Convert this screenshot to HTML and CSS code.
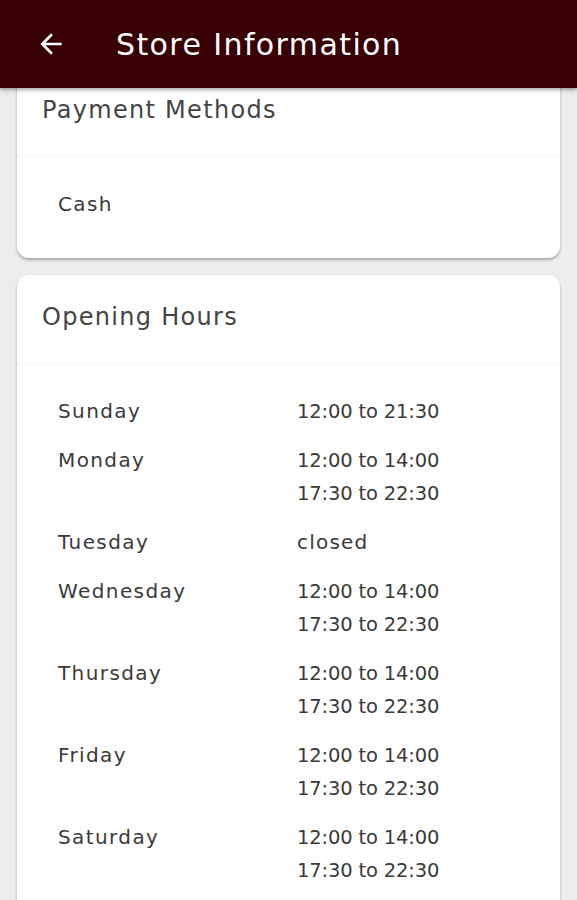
FILE: index.html
```html
<!DOCTYPE html>
<html>
<head>
<meta charset="utf-8">
<link rel="stylesheet" href="styles.css">
</head>
<body>
<header class="appbar">
  <svg class="back" width="32" height="32" viewBox="0 0 24 24"><path d="M20 11H7.83l5.59-5.59L12 4l-8 8 8 8 1.41-1.41L7.83 13H20v-2z" fill="#fff"/></svg>
  <h1 class="appbar-title">Store Information</h1>
</header>
<main class="content">
  <section class="card first">
    <div class="card-head">Payment Methods</div>
    <div class="card-body">
      <div class="label">Cash</div>
    </div>
  </section>
  <section class="card">
    <div class="card-head">Opening Hours</div>
    <div class="card-body hours">
      <div class="label">Sunday</div><div class="times"><div>12:00 to 21:30</div></div>
      <div class="label">Monday</div><div class="times"><div>12:00 to 14:00</div><div>17:30 to 22:30</div></div>
      <div class="label">Tuesday</div><div class="times"><div class="word">closed</div></div>
      <div class="label">Wednesday</div><div class="times"><div>12:00 to 14:00</div><div>17:30 to 22:30</div></div>
      <div class="label">Thursday</div><div class="times"><div>12:00 to 14:00</div><div>17:30 to 22:30</div></div>
      <div class="label">Friday</div><div class="times"><div>12:00 to 14:00</div><div>17:30 to 22:30</div></div>
      <div class="label">Saturday</div><div class="times"><div>12:00 to 14:00</div><div>17:30 to 22:30</div></div>
    </div>
  </section>
</main>
</body>
</html>
```
FILE: styles.css
```css
* { box-sizing: border-box; }
html, body { margin: 0; padding: 0; }
body {
  background: #ededee;
  font-family: "DejaVu Sans", sans-serif;
  color: #3a3a3a;
  height: 900px;
  overflow: hidden;
}
.appbar {
  position: relative;
  z-index: 2;
  height: 88px;
  background: #380004;
  display: flex;
  align-items: center;
  padding-left: 35px;
  box-shadow: 0 2px 4px rgba(0,0,0,0.35);
}
.back { flex: none; margin-top: -1px; }
.appbar-title {
  margin: 0 0 0 49px;
  font-size: 30px;
  font-weight: 500;
  color: #fff;
  letter-spacing: 1.4px;
}
.content {
  margin-top: -20px;
  padding: 0 17px;
  display: flex;
  flex-direction: column;
  gap: 17px;
}
.card {
  background: #fff;
  border-radius: 12px;
  box-shadow: 0 2px 3px rgba(0,0,0,0.3);
}
.card-head {
  height: 89px;
  padding: 27px 0 0 25px;
  font-size: 24px;
  line-height: 30px;
  letter-spacing: 1.3px;
  color: #444;
  border-bottom: 1px solid #f6f6f6;
}
.card-body {
  padding: 31px 25px 37px 41px;
  font-size: 20px;
  line-height: 33px;
  color: #3a3a3a;
}
.label { letter-spacing: 1.4px; }
.times { font-size: 19.5px; letter-spacing: -0.15px; }
.times .word { font-size: 20px; letter-spacing: 1.2px; }
.hours {
  display: grid;
  grid-template-columns: 239px 1fr;
  row-gap: 16px;
}
```
